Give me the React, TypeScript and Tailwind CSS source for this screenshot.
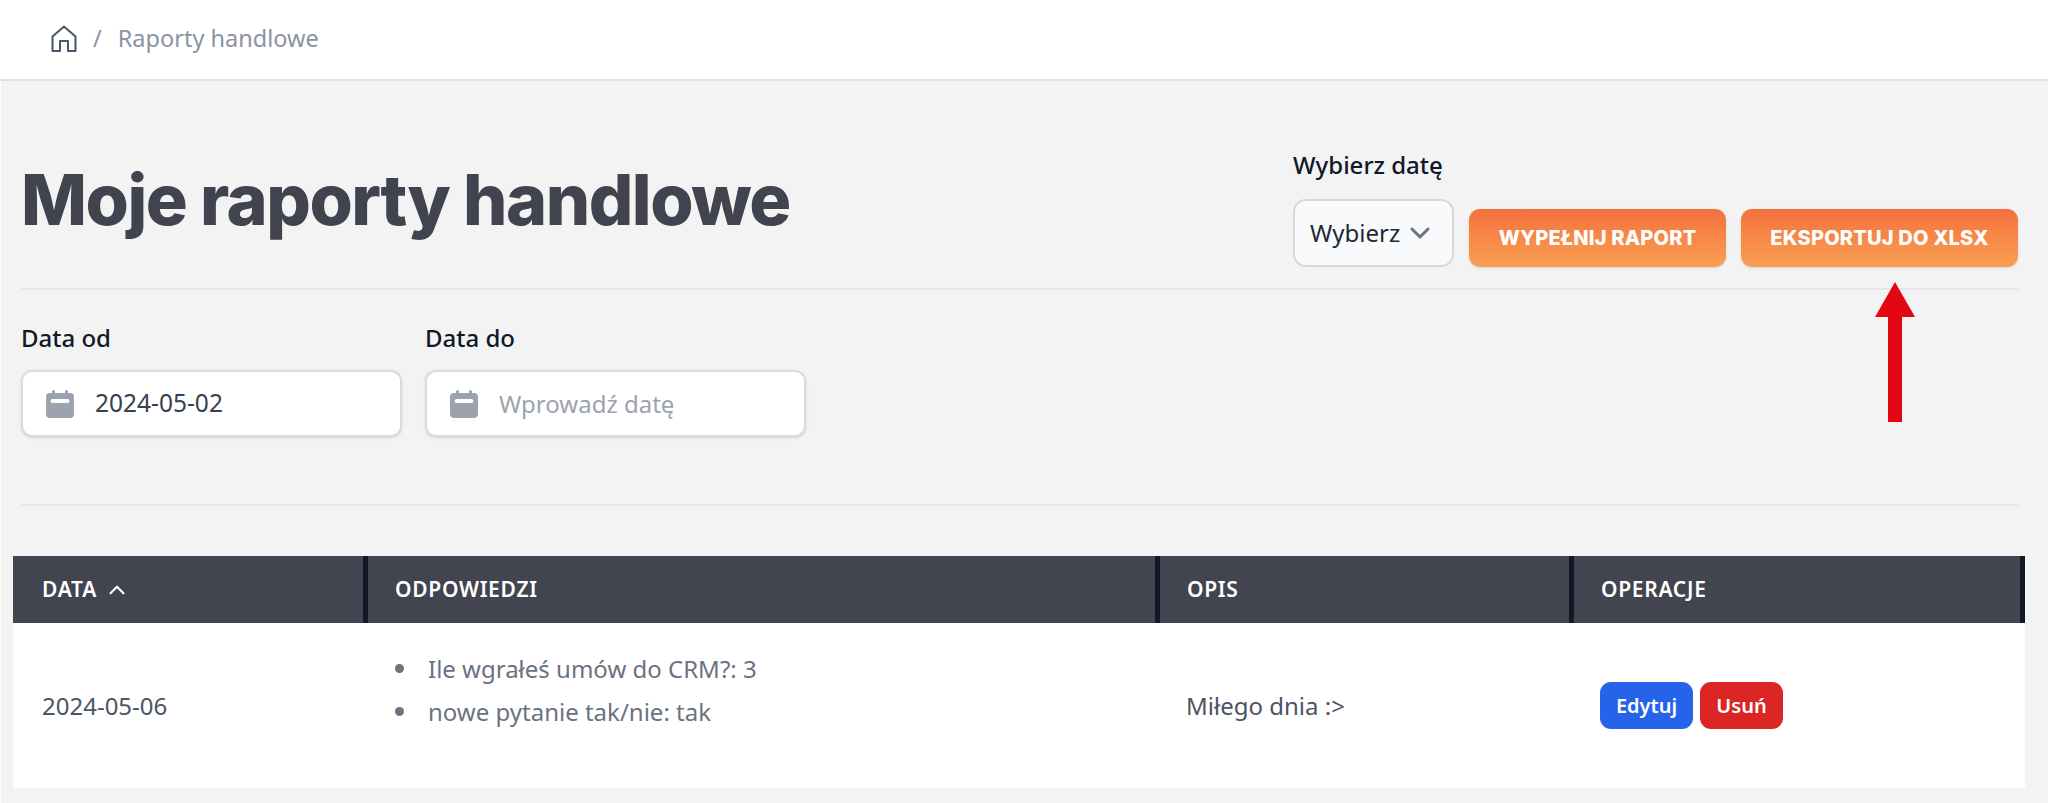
import { ChevronDown, ChevronUp } from 'lucide-react';

function HomeIcon() {
    return (
        <svg width="26" height="27" viewBox="0 0 26 27" fill="none" stroke="#4a5568" strokeWidth="2" strokeLinejoin="round">
            <path d="M1.500 26V11.500L13 1.500l11.500 10V26H17V16H9v10Z" />
        </svg>
    );
}

function CalendarIcon() {
    return (
        <svg width="28" height="28" viewBox="0 0 28 28" className="shrink-0">
            <path
                fill="#9ca3af"
                fillRule="evenodd"
                d="M7.500 0A1.500 1.500 0 0 1 9 1.500V3h10V1.500a1.500 1.500 0 0 1 3 0V3h2a4 4 0 0 1 4 4v17a4 4 0 0 1-4 4H4a4 4 0 0 1-4-4V7a4 4 0 0 1 4-4h2V1.500A1.500 1.500 0 0 1 7.500 0ZM6.500 9a1.500 1.500 0 0 0 0 4h15a1.500 1.500 0 0 0 0-4h-15Z"
            />
        </svg>
    );
}

function DateField({ label, value, placeholder }: { label: string; value?: string; placeholder?: string }) {
    return (
        <div className="w-[381px]">
            <p className="mb-[17px] text-[24px] leading-[30px] font-medium text-[#111827]">{label}</p>
            <div className="flex h-[67px] items-center gap-[21px] rounded-[11px] border-2 border-[#d9dbe0] bg-white pl-[23px] shadow-sm">
                <CalendarIcon />
                <span className={value ? 'text-[24.500px] text-[#374151]' : 'text-[24px] text-[#9ca3af]'}>
                    {value ?? placeholder}
                </span>
            </div>
        </div>
    );
}

function OrangeButton({ children, width }: { children: string; width: string }) {
    return (
        <button
            className={`${width} h-[58px] rounded-[11px] bg-linear-to-b from-[#f4703e] to-[#f99f52] text-center font-['Inter',sans-serif] text-[20px] font-extrabold tracking-[0.200px] text-white shadow-sm`}
        >
            {children}
        </button>
    );
}

const headers = ['ODPOWIEDZI', 'OPIS', 'OPERACJE'];
const answers = ['Ile wgrałeś umów do CRM?: 3', 'nowe pytanie tak/nie: tak'];

export default function App() {
    return (
        <div className="relative min-h-screen overflow-hidden bg-white font-['Noto_Sans',sans-serif]">
            <header className="flex h-[81px] items-center gap-[16px] border-b-2 border-[#dfe1e6] pb-[2px] pl-[51px] text-[23.500px] text-[#8b93a3]">
                <HomeIcon />
                <span>/</span>
                <span>Raporty handlowe</span>
            </header>

            <main className="ml-[1px] h-[722px] bg-[#f3f3f3]">
                <div className="pr-[30px] pl-[20px]">
                    <div className="flex h-[209px] items-end justify-between border-b-2 border-[#e6e7ea] pb-[21px]">
                        <h1 className="mb-[32px] font-['Inter',sans-serif] text-[70px] leading-none font-extrabold tracking-[-1.500px] text-[#41434f]">
                            Moje raporty handlowe
                        </h1>
                        <div className="flex items-end gap-[15px]">
                            <div>
                                <p className="mb-[19px] text-[24px] leading-[30px] font-medium text-[#111827]">Wybierz datę</p>
                                <div className="flex h-[68px] w-[161px] items-center justify-between rounded-[13px] border-2 border-[#d5d8de] bg-[#f9fafb] pr-[16px] pl-[15px] text-[24px] text-[#1f2937]">
                                    Wybierz
                                    <ChevronDown size={32} color="#6b7280" strokeWidth={2.250} />
                                </div>
                            </div>
                            <OrangeButton width="w-[257px]">WYPEŁNIJ RAPORT</OrangeButton>
                            <OrangeButton width="w-[277px]">EKSPORTUJ DO XLSX</OrangeButton>
                        </div>
                    </div>

                    <div className="flex h-[216px] gap-[23px] border-b-2 border-[#e6e7ea] pt-[33px]">
                        <DateField label="Data od" value="2024-05-02" />
                        <DateField label="Data do" placeholder="Wprowadź datę" />
                    </div>
                </div>

                <div className="pt-[50px] pl-[12px]">
                    <table className="w-[2012px] table-fixed border-separate border-spacing-0">
                        <colgroup>
                            <col className="w-[355px]" />
                            <col className="w-[792px]" />
                            <col className="w-[414px]" />
                            <col className="w-[451px]" />
                        </colgroup>
                        <thead>
                            <tr className="h-[67px] bg-[#424450] text-left text-[21px] tracking-[0.700px] text-white">
                                <th className="border-r-[5px] border-[#111827] pl-[29px] font-semibold">
                                    <span className="flex items-center gap-[7px]">
                                        DATA <ChevronUp size={26} strokeWidth={2} />
                                    </span>
                                </th>
                                {headers.map((header) => (
                                    <th key={header} className="border-r-[5px] border-[#111827] pl-[27px] font-semibold">
                                        {header}
                                    </th>
                                ))}
                            </tr>
                        </thead>
                        <tbody>
                            <tr className="h-[165px] bg-white text-[24px]">
                                <td className="pl-[29px] text-[#4b5563]">2024-05-06</td>
                                <td className="pl-[27px] text-[#6b7280]">
                                    <ul className="mb-[31px] leading-[43px]">
                                        {answers.map((answer) => (
                                            <li key={answer} className="flex items-center gap-[24px]">
                                                <span className="size-[9px] rounded-full bg-[#6b7280]" />
                                                {answer}
                                            </li>
                                        ))}
                                    </ul>
                                </td>
                                <td className="pl-[26px] text-[#4b5563]">Miłego dnia :&gt;</td>
                                <td className="pl-[26px]">
                                    <div className="flex gap-[7px]">
                                        <button className="h-[47px] w-[93px] rounded-[11px] bg-[#2563eb] text-[20px] font-semibold text-white">Edytuj</button>
                                        <button className="h-[47px] w-[83px] rounded-[11px] bg-[#dc2626] text-[20px] font-semibold text-white">Usuń</button>
                                    </div>
                                </td>
                            </tr>
                        </tbody>
                    </table>
                </div>
            </main>

            {/* red annotation arrow over the export button */}
            <svg className="absolute top-[282px] left-[1875px]" width="40" height="140" viewBox="0 0 40 140">
                <path fill="#e30613" d="M20 0 40 35H27V140H13V35H0Z" />
            </svg>
        </div>
    );
}
